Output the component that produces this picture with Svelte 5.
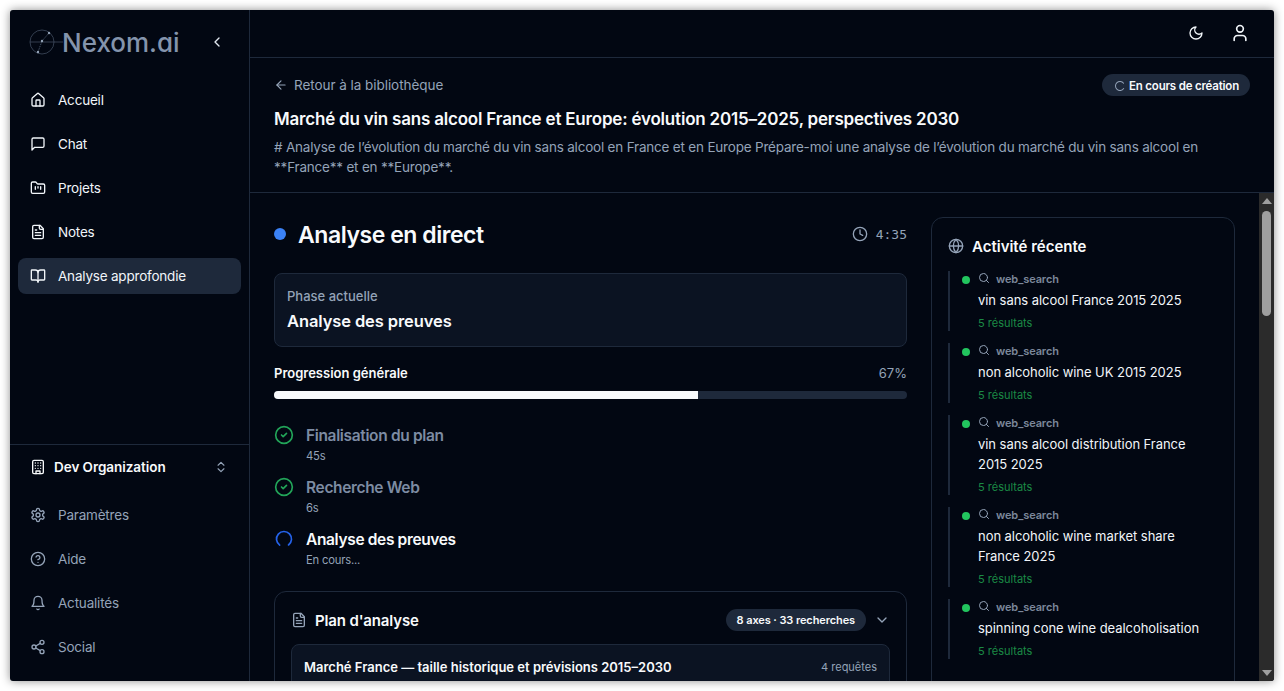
<script>
  const mainNav = [
    { label: "Accueil", icon: "home" },
    { label: "Chat", icon: "chat" },
    { label: "Projets", icon: "folder" },
    { label: "Notes", icon: "file" },
    { label: "Analyse approfondie", icon: "book", active: true }
  ];
  const footerNav = [
    { label: "Paramètres", icon: "settings" },
    { label: "Aide", icon: "help" },
    { label: "Actualités", icon: "bell" },
    { label: "Social", icon: "share" }
  ];
  const steps = [
    { name: "Finalisation du plan", time: "45s", done: true },
    { name: "Recherche Web", time: "6s", done: true },
    { name: "Analyse des preuves", time: "En cours...", done: false }
  ];
  const activity = [
    "vin sans alcool France 2015 2025",
    "non alcoholic wine UK 2015 2025",
    "vin sans alcool distribution France 2015 2025",
    "non alcoholic wine market share France 2025",
    "spinning cone wine dealcoholisation"
  ];
</script>

{#snippet icon(name, size = 16)}
  <svg class="ico" width={size} height={size} viewBox="0 0 24 24" fill="none" stroke="currentColor" stroke-width="2" stroke-linecap="round" stroke-linejoin="round">
    {#if name === "home"}
      <path d="M15 21v-8a1 1 0 0 0-1-1h-4a1 1 0 0 0-1 1v8" /><path d="M3 10a2 2 0 0 1 .709-1.528l7-5.999a2 2 0 0 1 2.582 0l7 5.999A2 2 0 0 1 21 10v9a2 2 0 0 1-2 2H5a2 2 0 0 1-2-2z" />
    {:else if name === "chat"}
      <path d="M21 15a2 2 0 0 1-2 2H7l-4 4V5a2 2 0 0 1 2-2h14a2 2 0 0 1 2 2z" />
    {:else if name === "folder"}
      <path d="M4 20h16a2 2 0 0 0 2-2V8a2 2 0 0 0-2-2h-7.93a2 2 0 0 1-1.66-.9l-.82-1.2A2 2 0 0 0 7.93 3H4a2 2 0 0 0-2 2v13c0 1.1.9 2 2 2Z" /><path d="M8 10v4" /><path d="M12 10v2" /><path d="M16 10v4" />
    {:else if name === "file"}
      <path d="M15 2H6a2 2 0 0 0-2 2v16a2 2 0 0 0 2 2h12a2 2 0 0 0 2-2V7Z" /><path d="M14 2v4a2 2 0 0 0 2 2h4" /><path d="M10 9H8" /><path d="M16 13H8" /><path d="M16 17H8" />
    {:else if name === "book"}
      <path d="M12 7v14" /><path d="M3 18a1 1 0 0 1-1-1V4a1 1 0 0 1 1-1h5a4 4 0 0 1 4 4 4 4 0 0 1 4-4h5a1 1 0 0 1 1 1v13a1 1 0 0 1-1 1h-6a3 3 0 0 0-3 3 3 3 0 0 0-3-3z" />
    {:else if name === "building"}
      <rect width="16" height="20" x="4" y="2" rx="2" ry="2" /><path d="M9 22v-4h6v4" /><path d="M8 6h.01" /><path d="M16 6h.01" /><path d="M12 6h.01" /><path d="M12 10h.01" /><path d="M12 14h.01" /><path d="M16 10h.01" /><path d="M16 14h.01" /><path d="M8 10h.01" /><path d="M8 14h.01" />
    {:else if name === "updown"}
      <path d="m7 15 5 5 5-5" /><path d="m7 9 5-5 5 5" />
    {:else if name === "settings"}
      <path d="M12.22 2h-.44a2 2 0 0 0-2 2v.18a2 2 0 0 1-1 1.73l-.43.25a2 2 0 0 1-2 0l-.15-.08a2 2 0 0 0-2.73.73l-.22.38a2 2 0 0 0 .73 2.73l.15.1a2 2 0 0 1 1 1.72v.51a2 2 0 0 1-1 1.74l-.15.09a2 2 0 0 0-.73 2.73l.22.38a2 2 0 0 0 2.73.73l.15-.08a2 2 0 0 1 2 0l.43.25a2 2 0 0 1 1 1.73V20a2 2 0 0 0 2 2h.44a2 2 0 0 0 2-2v-.18a2 2 0 0 1 1-1.73l.43-.25a2 2 0 0 1 2 0l.15.08a2 2 0 0 0 2.73-.73l.22-.39a2 2 0 0 0-.73-2.73l-.15-.08a2 2 0 0 1-1-1.74v-.5a2 2 0 0 1 1-1.74l.15-.09a2 2 0 0 0 .73-2.73l-.22-.38a2 2 0 0 0-2.73-.73l-.15.08a2 2 0 0 1-2 0l-.43-.25a2 2 0 0 1-1-1.73V4a2 2 0 0 0-2-2z" /><circle cx="12" cy="12" r="3" />
    {:else if name === "help"}
      <circle cx="12" cy="12" r="10" /><path d="M9.09 9a3 3 0 0 1 5.83 1c0 2-3 3-3 3" /><path d="M12 17h.01" />
    {:else if name === "bell"}
      <path d="M6 8a6 6 0 0 1 12 0c0 7 3 9 3 9H3s3-2 3-9" /><path d="M10.3 21a1.94 1.94 0 0 0 3.4 0" />
    {:else if name === "share"}
      <circle cx="18" cy="5" r="3" /><circle cx="6" cy="12" r="3" /><circle cx="18" cy="19" r="3" /><path d="m8.59 13.51 6.83 3.98" /><path d="m15.41 6.51-6.82 3.98" />
    {:else if name === "moon"}
      <path d="M12 3a6 6 0 0 0 9 9 9 9 0 1 1-9-9Z" />
    {:else if name === "user"}
      <path d="M19 21v-2a4 4 0 0 0-4-4H9a4 4 0 0 0-4 4v2" /><circle cx="12" cy="7" r="4" />
    {:else if name === "back"}
      <path d="m12 19-7-7 7-7" /><path d="M19 12H5" />
    {:else if name === "check"}
      <circle cx="12" cy="12" r="10" /><path d="m9 12 2 2 4-4" />
    {:else if name === "clock"}
      <circle cx="12" cy="12" r="10" /><path d="M12 6v6l4 2" />
    {:else if name === "globe"}
      <circle cx="12" cy="12" r="10" /><path d="M12 2a14.5 14.5 0 0 0 0 20 14.5 14.5 0 0 0 0-20" /><path d="M2 12h20" />
    {:else if name === "search"}
      <circle cx="11" cy="11" r="8" /><path d="m21 21-4.3-4.3" />
    {:else if name === "down"}
      <path d="m6 9 6 6 6-6" />
    {:else if name === "left"}
      <path d="m15 18-6-6 6-6" />
    {:else if name === "spin"}
      <path d="M21 12a9 9 0 1 1-6.219-8.56" transform="rotate(125 12 12)" />
    {:else if name === "c"}
      <path d="M21 12a9 9 0 1 1-6.219-8.56" transform="rotate(35 12 12)" />
    {/if}
  </svg>
{/snippet}

<div class="window">
  <aside class="sidebar">
    <div class="brand">
      <div class="logo">
        <svg width="34" height="28" viewBox="0 0 34 28" fill="none" stroke="#475569" stroke-width="0.7">
          <circle cx="13" cy="14" r="12" />
          <path d="M1 14h33" />
          <path d="M9 24l4-11 7-8" stroke-dasharray="1.5 1" stroke="#64748b" />
          <circle cx="20" cy="5" r="1.2" fill="#94a3b8" stroke="none" />
          <circle cx="13" cy="13" r="1.2" fill="#94a3b8" stroke="none" />
          <circle cx="9" cy="24" r="1.2" fill="#94a3b8" stroke="none" />
        </svg>
        <span class="wordmark">Nexom.ai</span>
      </div>
      <span class="collapse">{@render icon("left", 16)}</span>
    </div>

    <nav class="nav">
      {#each mainNav as item}
        <button class="nav-item" class:active={item.active}>
          {@render icon(item.icon, 16)}
          <span>{item.label}</span>
        </button>
      {/each}
    </nav>

    <div class="side-bottom">
      <div class="org">
        {@render icon("building", 16)}
        <span class="org-name">Dev Organization</span>
        <span class="org-toggle">{@render icon("updown", 14)}</span>
      </div>
      <nav class="nav">
        {#each footerNav as item}
          <button class="nav-item muted">
            {@render icon(item.icon, 16)}
            <span>{item.label}</span>
          </button>
        {/each}
      </nav>
    </div>
  </aside>

  <div class="main">
    <header class="topbar">
      <span class="top-ico">{@render icon("moon", 16)}</span>
      <span class="top-ico">{@render icon("user", 20)}</span>
    </header>

    <section class="page-head">
      <div class="head-row">
        <span class="back">{@render icon("back", 14)} Retour à la bibliothèque</span>
        <span class="status">{@render icon("c", 12)} En cours de création</span>
      </div>
      <h1>Marché du vin sans alcool France et Europe: évolution 2015–2025, perspectives 2030</h1>
      <p># Analyse de l’évolution du marché du vin sans alcool en France et en Europe Prépare-moi une analyse de l’évolution du marché du vin sans alcool en **France** et en **Europe**.</p>
    </section>

    <div class="scroll-wrap">
      <div class="scroller">
        <div class="columns">
          <div class="left">
            <div class="live-head">
              <span class="live-dot"></span>
              <h2>Analyse en direct</h2>
              <span class="timer">{@render icon("clock", 16)} 4:35</span>
            </div>

            <div class="phase">
              <div class="phase-label">Phase actuelle</div>
              <div class="phase-name">Analyse des preuves</div>
            </div>

            <div class="progress-head">
              <span>Progression générale</span>
              <span class="pct">67%</span>
            </div>
            <div class="track"><div class="fill" style="width: 67%"></div></div>

            <ul class="steps">
              {#each steps as step}
                <li>
                  <span class="step-ico" class:ok={step.done}>
                    {@render icon(step.done ? "check" : "spin", 20)}
                  </span>
                  <div class="step-text">
                    <div class="step-name" class:current={!step.done}>{step.name}</div>
                    <div class="step-time">{step.time}</div>
                  </div>
                </li>
              {/each}
            </ul>

            <div class="plan">
              <div class="plan-head">
                <span class="plan-ico">{@render icon("file", 16)}</span>
                <span class="plan-title">Plan d'analyse</span>
                <span class="plan-pill">8 axes · 33 recherches</span>
                <span class="plan-ico">{@render icon("down", 16)}</span>
              </div>
              <div class="axis">
                <span class="axis-name">Marché France — taille historique et prévisions 2015–2030</span>
                <span class="axis-count">4 requêtes</span>
              </div>
            </div>
          </div>

          <aside class="activity">
            <div class="activity-head">
              <span class="plan-ico">{@render icon("globe", 16)}</span>
              <h3>Activité récente</h3>
            </div>
            <ul class="feed">
              {#each activity as query}
                <li>
                  <div class="feed-top">
                    <span class="feed-dot"></span>
                    <span class="feed-ico">{@render icon("search", 12)}</span>
                    <span class="feed-tool">web_search</span>
                  </div>
                  <div class="feed-query">{query}</div>
                  <div class="feed-res">5 résultats</div>
                </li>
              {/each}
            </ul>
          </aside>
        </div>
      </div>

      <div class="scrollbar">
        <span class="arrow up"></span>
        <span class="thumb"></span>
        <span class="arrow down"></span>
      </div>
    </div>
  </div>
</div>

<style>
  :global(body) {
    margin: 0;
    background: #fff;
    font-family: Inter, "Liberation Sans", sans-serif;
  }

  .window {
    display: flex;
    width: 1264px;
    height: 671px;
    margin: 10px;
    background: #020712;
    color: #f8fafc;
    overflow: hidden;
    border-radius: 3px;
    box-shadow: 0 0 10px rgba(0, 0, 0, 0.45);
  }

  .ico {
    display: block;
    flex-shrink: 0;
  }

  /* Sidebar */
  .sidebar {
    width: 239px;
    flex-shrink: 0;
    display: flex;
    flex-direction: column;
    border-right: 1px solid #1e293b;
  }

  .brand {
    display: flex;
    align-items: center;
    justify-content: space-between;
    height: 64px;
    padding: 0 24px 0 19px;
  }

  .logo {
    display: flex;
    align-items: center;
  }

  .logo svg {
    margin-right: -1px;
  }

  .wordmark {
    font-size: 26px;
    font-weight: 500;
    color: #8494ac;
    font-feature-settings: "cv11";
  }

  .collapse {
    color: #e2e8f0;
  }

  .nav {
    display: flex;
    flex-direction: column;
    gap: 8px;
    padding: 8px;
  }

  .nav-item {
    display: flex;
    align-items: center;
    gap: 12px;
    height: 36px;
    padding: 0 12px;
    border: 0;
    border-radius: 8px;
    background: transparent;
    color: #f1f5f9;
    font: inherit;
    font-size: 13.5px;
    letter-spacing: -0.2px;
    text-align: left;
  }

  .nav-item.active {
    background: #1e293b;
  }

  .nav-item.muted {
    color: #94a3b8;
  }

  .side-bottom {
    margin-top: auto;
    padding-bottom: 8px;
    border-top: 1px solid #1e293b;
  }

  .org {
    display: flex;
    align-items: center;
    gap: 8px;
    height: 18px;
    padding: 13px 21px 4px 20px;
    margin-bottom: 9px;
    font-size: 13.5px;
    font-weight: 600;
    letter-spacing: -0.05px;
  }

  .org-name {
    flex: 1;
  }

  .org-toggle {
    color: #94a3b8;
  }

  /* Main */
  .main {
    flex: 1;
    min-width: 0;
    display: flex;
    flex-direction: column;
  }

  .topbar {
    height: 47px;
    flex-shrink: 0;
    display: flex;
    align-items: center;
    justify-content: flex-end;
    gap: 26px;
    padding-right: 24px;
    border-bottom: 1px solid #1e293b;
  }

  .top-ico {
    color: #f1f5f9;
    margin-top: -1px;
  }

  .page-head {
    flex-shrink: 0;
    height: 135px;
    box-sizing: border-box;
    padding: 16px 24px 0;
    border-bottom: 1px solid #1e293b;
  }

  .head-row {
    display: flex;
    align-items: center;
    justify-content: space-between;
    height: 22px;
  }

  .back {
    display: flex;
    align-items: center;
    gap: 6px;
    color: #94a3b8;
    font-size: 13.5px;
    letter-spacing: -0.05px;
  }

  .status {
    display: flex;
    align-items: center;
    gap: 3px;
    height: 22px;
    box-sizing: border-box;
    padding: 1px 11px 0 12px;
    border-radius: 11px;
    background: #1e293b;
    font-size: 11.5px;
    font-weight: 600;
    letter-spacing: -0.2px;
  }

  .status :global(svg) {
    color: #94a3b8;
  }

  h1 {
    margin: 9px 0 0;
    font-size: 17px;
    line-height: 28px;
    font-weight: 600;
    letter-spacing: -0.2px;
  }

  .page-head p {
    margin: 4px 0 0;
    font-size: 13.5px;
    line-height: 20px;
    letter-spacing: -0.2px;
    color: #94a3b8;
  }

  .scroll-wrap {
    flex: 1;
    min-height: 0;
    display: flex;
  }

  .scroller {
    flex: 1;
    min-width: 0;
    overflow: hidden;
  }

  .scrollbar {
    width: 15px;
    flex-shrink: 0;
    display: flex;
    flex-direction: column;
    align-items: center;
    background: #2b2b2b;
  }

  .thumb {
    width: 9px;
    height: 105px;
    margin-top: 7px;
    border-radius: 5px;
    background: #9f9f9f;
  }

  .arrow {
    width: 0;
    height: 0;
    border-left: 5px solid transparent;
    border-right: 5px solid transparent;
  }

  .arrow.up {
    margin-top: 5px;
    border-bottom: 6px solid #9f9f9f;
  }

  .arrow.down {
    margin-top: auto;
    margin-bottom: 5px;
    border-top: 6px solid #9f9f9f;
  }

  .columns {
    display: flex;
    gap: 24px;
    padding: 24px 24px 40px;
  }

  .left {
    width: 633px;
    flex-shrink: 0;
  }

  .live-head {
    display: flex;
    align-items: center;
    height: 36px;
    margin-bottom: 20px;
  }

  .live-dot {
    width: 12px;
    height: 12px;
    border-radius: 50%;
    background: #3b82f6;
    margin-right: 12px;
    margin-top: -2px;
  }

  h2 {
    flex: 1;
    margin: 0;
    font-size: 23px;
    line-height: 32px;
    font-weight: 600;
    letter-spacing: -0.45px;
  }

  .timer {
    display: flex;
    align-items: center;
    gap: 8px;
    margin-top: -2px;
    color: #94a3b8;
    font-family: "DejaVu Sans Mono", monospace;
    font-size: 13px;
  }

  .phase {
    height: 74px;
    box-sizing: border-box;
    padding: 13px 12px;
    border: 1px solid #1e293b;
    border-radius: 8px;
    background: #0b1322;
  }

  .phase-label {
    font-size: 13px;
    line-height: 18px;
    font-weight: 500;
    color: #94a3b8;
  }

  .phase-name {
    margin-top: 4px;
    font-size: 16.5px;
    line-height: 24px;
    font-weight: 600;
    letter-spacing: -0.1px;
  }

  .progress-head {
    display: flex;
    justify-content: space-between;
    margin-top: 16px;
    font-size: 13px;
    line-height: 20px;
    font-weight: 600;
  }

  .pct {
    color: #94a3b8;
    font-weight: 400;
  }

  .track {
    height: 8px;
    margin-top: 8px;
    border-radius: 4px;
    background: #1e293b;
    overflow: hidden;
  }

  .fill {
    height: 100%;
    background: #f8fafc;
  }

  .steps {
    list-style: none;
    margin: 24px 0 0;
    padding: 0;
    display: flex;
    flex-direction: column;
    gap: 8px;
  }

  .steps li {
    display: flex;
    gap: 12px;
    height: 44px;
  }

  .step-ico {
    width: 20px;
    padding-top: 2px;
    color: #2563eb;
  }

  .step-ico.ok {
    color: #22a559;
  }

  .step-text {
    padding-top: 1px;
  }

  .step-name {
    font-size: 15.5px;
    line-height: 24px;
    font-weight: 600;
    letter-spacing: -0.35px;
    color: #7d8ca3;
  }

  .step-name.current {
    color: #f8fafc;
  }

  .step-time {
    font-size: 11.25px;
    line-height: 16px;
    letter-spacing: -0.2px;
    color: #94a3b8;
  }

  .plan {
    margin-top: 20px;
    padding: 16px;
    border: 1px solid #1e293b;
    border-radius: 12px;
  }

  .plan-head {
    display: flex;
    align-items: center;
    gap: 8px;
    height: 24px;
    margin-bottom: 12px;
  }

  .plan-ico {
    color: #94a3b8;
  }

  .plan-title {
    flex: 1;
    font-size: 15px;
    font-weight: 600;
    letter-spacing: -0.15px;
  }

  .plan-pill {
    height: 22px;
    line-height: 22px;
    padding: 0 11px;
    border-radius: 11px;
    background: #1e293b;
    font-size: 11px;
    font-weight: 600;
    letter-spacing: -0.1px;
  }

  .axis {
    display: flex;
    justify-content: space-between;
    align-items: center;
    height: 44px;
    padding: 0 12px;
    border: 1px solid #1e293b;
    border-radius: 8px;
    background: #0b1322;
  }

  .axis-name {
    font-size: 13px;
    font-weight: 600;
  }

  .axis-count {
    font-size: 11px;
    color: #94a3b8;
  }

  .activity {
    width: 304px;
    box-sizing: border-box;
    flex-shrink: 0;
    padding: 16px;
    border: 1px solid #1e293b;
    border-radius: 12px;
  }

  .activity-head {
    display: flex;
    align-items: center;
    gap: 8px;
    height: 24px;
    margin-bottom: 13px;
  }

  h3 {
    margin: 0;
    font-size: 15px;
    font-weight: 600;
  }

  .feed {
    list-style: none;
    margin: 0;
    padding: 0;
    display: flex;
    flex-direction: column;
    gap: 12px;
  }

  .feed li {
    border-left: 2px solid #1e293b;
    padding-left: 12px;
  }

  .feed-top {
    display: flex;
    align-items: center;
    height: 16px;
  }

  .feed-dot {
    width: 8px;
    height: 8px;
    border-radius: 50%;
    background: #22c55e;
    margin-right: 8px;
    margin-top: 2px;
  }

  .feed-ico {
    color: #94a3b8;
    margin-right: 6px;
    margin-top: -2px;
  }

  .feed-tool {
    font-size: 11px;
    font-weight: 600;
    letter-spacing: -0.1px;
    color: #7c889b;
  }

  .feed-query {
    margin-top: 3px;
    padding-left: 16px;
    font-size: 13px;
    line-height: 20px;
    letter-spacing: -0.05px;
    color: #f1f5f9;
  }

  .feed-res {
    margin-top: 5px;
    padding-left: 16px;
    font-size: 11px;
    line-height: 16px;
    color: #1b8a45;
  }
</style>
